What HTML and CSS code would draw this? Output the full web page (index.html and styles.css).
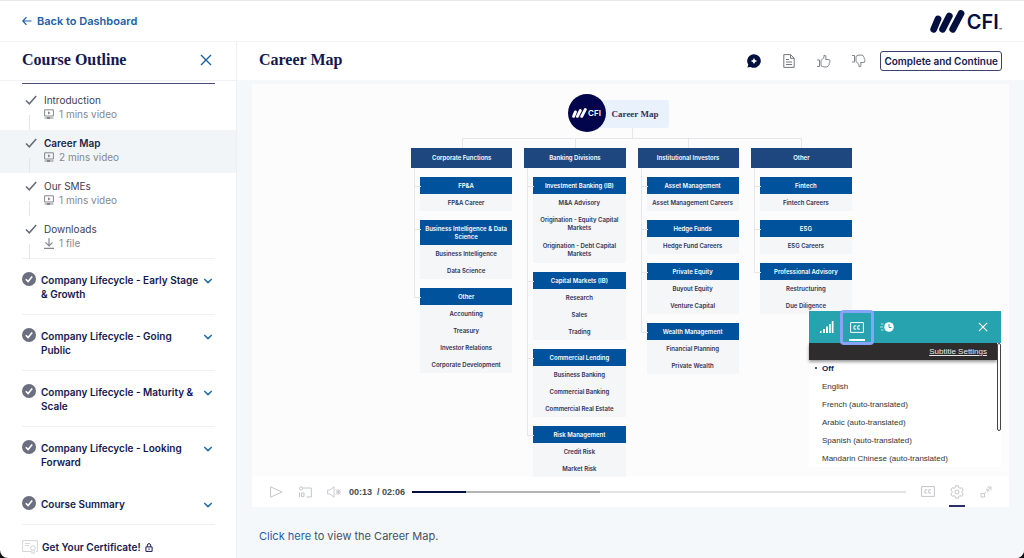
FILE: index.html
```html
<!DOCTYPE html>
<html lang="en">
<head>
    <meta charset="UTF-8">
    <meta name="viewport" content="width=device-width, initial-scale=1.0">
    <title>Career Map - CFI</title>
    <link rel="stylesheet" href="styles.css">
</head>
<body>
    <svg class="sprite" aria-hidden="true">
        <symbol id="check" viewBox="0 0 12 10"><path d="M1 5.5 L4.3 8.8 L11.2 1" fill="none" stroke="currentColor" stroke-width="1.5"/></symbol>
        <symbol id="done" viewBox="0 0 14 14"><circle cx="7" cy="7" r="7" fill="#6b6f80"/><path d="M3.8 7.2 L6.1 9.5 L10.2 4.4" fill="none" stroke="#fff" stroke-width="1.6"/></symbol>
        <symbol id="chevron" viewBox="0 0 10 6"><path d="M1.3 1 L5 4.6 L8.7 1" fill="none" stroke="currentColor" stroke-width="1.5"/></symbol>
        <symbol id="video" viewBox="0 0 10 10"><path d="M.6 .8 H9.4 V7 H.6 Z M.5 9 H9.5" fill="none" stroke="currentColor"/><path d="M4 2.2 L6.6 3.9 L4 5.6 Z M3 8 h3 v2 h-3z" fill="currentColor"/></symbol>
        <symbol id="bars" viewBox="0 0 35 23"><path d="M3.700 19.300 L8 9 M12.600 19.300 L19.300 6 M22.700 19.300 L31 3.500" fill="none" stroke="currentColor" stroke-width="6.800" stroke-linecap="round"/></symbol>
        <symbol id="cross" viewBox="0 0 12 12"><path d="M1 1 L11 11 M11 1 L1 11" fill="none" stroke="currentColor" stroke-width="1.4"/></symbol>
        <symbol id="thumb" viewBox="0 0 15 14"><path d="M1 6 H3.500 V12.500 H1 M5 6.500 L7.500 4.200 Q8.200 3 8 1.200 Q10.200 .8 10 3.600 L9.600 5.500 H12.800 Q14.600 5.900 13.800 7.400 Q14.200 8.500 13.300 9.300 Q13.500 10.500 12.600 11.100 Q12.500 12.700 10.800 12.900 H8 Q6.500 12.700 5 11.600 Z" fill="none" stroke="currentColor" stroke-width=".9"/></symbol>
        <symbol id="cc" viewBox="0 0 14 11"><path d="M.6 .6 H13.400 V10.400 H.6 Z M6.200 3.900 H4 V7.100 H6.200 M10 3.900 H7.800 V7.100 H10" fill="none" stroke="currentColor"/></symbol>
    </svg>

    <div class="app">
        <header class="topbar">
            <a class="back" href="#">
                <svg width="10" height="10" viewBox="0 0 10 10"><path d="M9.500 5 H1 M4.500 1.200 L.8 5 L4.500 8.800" fill="none" stroke="currentColor" stroke-width="1.200"/></svg>
                Back to Dashboard
            </a>
            <a class="logo" href="#"><svg width="35" height="23"><use href="#bars"/></svg><span>CFI</span><small>™</small></a>
        </header>

        <div class="layout">
            <aside class="sidebar">
                <div class="sidebar-head">
                    <h2>Course Outline</h2>
                    <button type="button" aria-label="Close outline"><svg width="12" height="12"><use href="#cross"/></svg></button>
                </div>

                <ul class="lessons">
                    <li>
                        <svg class="tick" width="12" height="10"><use href="#check"/></svg>
                        <a href="#">Introduction</a>
                        <p><svg width="10" height="10"><use href="#video"/></svg>1 mins video</p>
                    </li>
                    <li class="current">
                        <svg class="tick" width="12" height="10"><use href="#check"/></svg>
                        <a href="#">Career Map</a>
                        <p><svg width="10" height="10"><use href="#video"/></svg>2 mins video</p>
                    </li>
                    <li>
                        <svg class="tick" width="12" height="10"><use href="#check"/></svg>
                        <a href="#">Our SMEs</a>
                        <p><svg width="10" height="10"><use href="#video"/></svg>1 mins video</p>
                    </li>
                    <li>
                        <svg class="tick" width="12" height="10"><use href="#check"/></svg>
                        <a href="#">Downloads</a>
                        <p><svg width="10" height="11" viewBox="0 0 10 11"><path d="M5 0 V7.500 M1.500 4.300 L5 7.800 L8.500 4.300 M0 10.300 H10" fill="none" stroke="currentColor" stroke-width="1.200"/></svg>1 file</p>
                    </li>
                </ul>

                <div class="sections">
                    <button type="button"><svg width="14" height="14"><use href="#done"/></svg><span>Company Lifecycle - Early Stage &amp; Growth</span><svg class="chev" width="10" height="6"><use href="#chevron"/></svg></button>
                    <button type="button"><svg width="14" height="14"><use href="#done"/></svg><span>Company Lifecycle - Going Public</span><svg class="chev" width="10" height="6"><use href="#chevron"/></svg></button>
                    <button type="button"><svg width="14" height="14"><use href="#done"/></svg><span>Company Lifecycle - Maturity &amp; Scale</span><svg class="chev" width="10" height="6"><use href="#chevron"/></svg></button>
                    <button type="button" class="plain"><svg width="14" height="14"><use href="#done"/></svg><span>Company Lifecycle - Looking Forward</span><svg class="chev" width="10" height="6"><use href="#chevron"/></svg></button>
                    <button type="button"><svg width="14" height="14"><use href="#done"/></svg><span>Course Summary</span><svg class="chev" width="10" height="6"><use href="#chevron"/></svg></button>
                </div>

                <a class="certificate" href="#">
                    <svg width="16" height="14" viewBox="0 0 16 14" fill="none" stroke="#d4d6da"><path d="M9 11.500 H.6 V.6 H15.400 V11.500 H14 M3 3.500 H8 M3 5.500 H7"/><circle cx="11" cy="8" r="2.300"/><path d="M9.800 10 V13.500 L11 12.700 L12.300 13.500 V10"/></svg>
                    Get Your Certificate!
                    <svg width="8" height="9" viewBox="0 0 8 9" fill="none" stroke="currentColor"><path d="M.9 3.900 H7.100 V8.400 H.9 Z M2.300 3.800 V2.200 Q2.500 .6 4 .6 Q5.500 .6 5.700 2.200 V3.800 M4 5.400 V7"/></svg>
                </a>
            </aside>

            <main>
                <div class="lesson-head">
                    <h1>Career Map</h1>
                    <div class="actions">
                        <button type="button" aria-label="Ask"><svg width="14" height="14" viewBox="0 0 14 14"><path d="M7 .2 A6.800 6.800 0 1 1 3.600 12.900 L.4 13.600 L1.300 10.700 A6.800 6.800 0 0 1 7 .2 Z" fill="#03103f"/><path d="M7 3.500 Q7.400 6.500 10.400 7 Q7.400 7.500 7 10.500 Q6.600 7.500 3.600 7 Q6.600 6.500 7 3.500 Z" fill="#fff"/></svg></button>
                        <button type="button" aria-label="Notes"><svg width="12" height="14" viewBox="0 0 12 14" fill="none" stroke="currentColor"><path d="M.8 .6 H7.500 L11.200 4.300 V13.400 H.8 Z M7.500 .8 V4.300 H11 M3 5.500 H6 M3 8 H9 M3 10.500 H9"/></svg></button>
                        <button type="button" aria-label="Like"><svg width="15" height="14"><use href="#thumb"/></svg></button>
                        <button type="button" aria-label="Dislike"><svg class="flip" width="15" height="14"><use href="#thumb"/></svg></button>
                        <button type="button" class="complete">Complete and Continue</button>
                    </div>
                </div>

                <section class="player">
                    <div class="chart">
                        <div class="root"><span class="badge"><svg width="15" height="10"><use href="#bars"/></svg>CFI</span>Career Map</div>
                        <div class="columns">
                            <div class="column">
                                <h3>Corporate Functions</h3>
                                <dl><dt>FP&amp;A</dt><dd>FP&amp;A Career</dd></dl>
                                <dl><dt>Business Intelligence &amp; Data<br>Science</dt><dd>Business Intelligence</dd><dd>Data Science</dd></dl>
                                <dl><dt>Other</dt><dd>Accounting</dd><dd>Treasury</dd><dd>Investor Relations</dd><dd>Corporate Development</dd></dl>
                            </div>
                            <div class="column">
                                <h3>Banking Divisions</h3>
                                <dl><dt>Investment Banking (IB)</dt><dd>M&amp;A Advisory</dd><dd class="tall">Origination - Equity Capital<br>Markets</dd><dd class="tall">Origination - Debt Capital<br>Markets</dd></dl>
                                <dl><dt>Capital Markets (IB)</dt><dd>Research</dd><dd>Sales</dd><dd>Trading</dd></dl>
                                <dl><dt>Commercial Lending</dt><dd>Business Banking</dd><dd>Commercial Banking</dd><dd>Commercial Real Estate</dd></dl>
                                <dl><dt>Risk Management</dt><dd>Credit Risk</dd><dd>Market Risk</dd></dl>
                            </div>
                            <div class="column">
                                <h3>Institutional Investors</h3>
                                <dl><dt>Asset Management</dt><dd>Asset Management Careers</dd></dl>
                                <dl><dt>Hedge Funds</dt><dd>Hedge Fund Careers</dd></dl>
                                <dl><dt>Private Equity</dt><dd>Buyout Equity</dd><dd>Venture Capital</dd></dl>
                                <dl><dt>Wealth Management</dt><dd>Financial Planning</dd><dd>Private Wealth</dd></dl>
                            </div>
                            <div class="column">
                                <h3>Other</h3>
                                <dl><dt>Fintech</dt><dd>Fintech Careers</dd></dl>
                                <dl><dt>ESG</dt><dd>ESG Careers</dd></dl>
                                <dl><dt>Professional Advisory</dt><dd>Restructuring</dd><dd>Due Diligence</dd></dl>
                            </div>
                        </div>
                    </div>

                    <div class="popup">
                        <div class="tabs">
                            <button type="button" aria-label="Quality"><svg width="14" height="12" viewBox="0 0 14 12" fill="currentColor"><path d="M0 10h1.500v2H0z M3 8h2v4H3z M6 5.500h2V12H6z M9 3h1.800v9H9z M11.800 0h1.700v12h-1.700z"/></svg></button>
                            <button type="button" class="active" aria-label="Captions"><svg width="14" height="11"><use href="#cc"/></svg></button>
                            <button type="button" aria-label="Speed"><svg width="14" height="12" viewBox="0 0 14 12"><circle cx="9" cy="6" r="4.800" fill="currentColor"/><path d="M9 3 V6.500 H11.500" fill="none" stroke="#26a3af"/><path d="M1 3 H3.500 M0 6 H3 M1 9 H3.500" stroke="currentColor" stroke-width=".7"/></svg></button>
                            <button type="button" class="close" aria-label="Close"><svg width="10" height="10"><use href="#cross"/></svg></button>
                        </div>
                        <div class="popup-body">
                            <div class="settings"><a href="#">Subtitle Settings</a></div>
                            <ul class="languages">
                                <li class="selected"><button type="button">Off</button></li>
                                <li><button type="button">English</button></li>
                                <li><button type="button">French (auto-translated)</button></li>
                                <li><button type="button">Arabic (auto-translated)</button></li>
                                <li><button type="button">Spanish (auto-translated)</button></li>
                                <li><button type="button">Mandarin Chinese (auto-translated)</button></li>
                            </ul>
                            <span class="scrollbar"></span>
                        </div>
                    </div>

                    <div class="controls">
                        <button type="button" aria-label="Play"><svg width="13" height="12" viewBox="0 0 13 12"><path d="M.6 .8 L12 6 L.6 11.200 Z" fill="none" stroke="currentColor"/></svg></button>
                        <button type="button" aria-label="Rewind 10 seconds"><svg width="14" height="12" viewBox="0 0 14 12"><path d="M4 2 H13.300 V11 H8.500 M3 .5 L1 2.300 L3 4.200 L5 2.300 Z M1.500 6.500 V11 M3.500 7 H6 V10.600 H3.500 Z" fill="none" stroke="currentColor"/></svg></button>
                        <button type="button" aria-label="Mute"><svg width="14" height="12" viewBox="0 0 14 12"><path d="M.6 4 H3 L7 .8 V11.200 L3 8 H.6 Z M9 3.500 L13.500 8.500 M13.500 3.500 L9 8.500 M11.200 3 V9 M9 6 H14" fill="none" stroke="currentColor" stroke-width=".9"/></svg></button>
                        <span class="time">00:13 &nbsp;/ 02:06</span>
                        <input class="seek" type="range" min="0" max="126" value="13" aria-label="Seek">
                        <button type="button" aria-label="Captions"><svg width="14" height="11"><use href="#cc"/></svg></button>
                        <button type="button" class="on" aria-label="Settings"><svg width="14" height="14" viewBox="0 0 14 14" fill="none" stroke="currentColor"><path d="M5.600 .8 H8.400 L8.800 2.600 L10 3.300 L11.800 2.700 L13.200 5.100 L11.900 6.300 V7.700 L13.200 8.900 L11.800 11.300 L10 10.700 L8.800 11.400 L8.400 13.200 H5.600 L5.200 11.400 L4 10.700 L2.200 11.300 L.8 8.900 L2.100 7.700 V6.300 L.8 5.100 L2.200 2.700 L4 3.300 L5.200 2.600 Z"/><circle cx="7" cy="7" r="2"/></svg></button>
                        <button type="button" aria-label="Full screen"><svg width="12" height="12" viewBox="0 0 12 12"><path d="M7.500 1 H11 V4.500 M11 1 L7 5 M7 2.500 V5 H9.500 M1 7.500 H4.500 V11 H1 Z M4.500 7.500 L6 6" fill="none" stroke="currentColor" stroke-width=".9"/></svg></button>
                    </div>
                </section>

                <p class="note"><a href="#">Click here</a> to view the Career Map.</p>
            </main>
        </div>
    </div>
</body>
</html>
```
FILE: styles.css
```css
* {
    box-sizing: border-box;
}
html {
    background-color: #111;
}
body {
    margin: 0;
    font-family: Inter, "Liberation Sans", sans-serif;
    font-size: 10px;
    color: #4a4e5e;
}
h1, h2, h3, p, ul, dl, dd {
    margin: 0;
    padding: 0;
}
ul {
    list-style: none;
}
a {
    color: #1b5fa3;
    text-decoration: none;
}
button {
    padding: 0;
    border: none;
    background: none;
    font: inherit;
    color: inherit;
    cursor: pointer;
}
svg {
    display: block;
    flex: none;
}
.sprite {
    position: absolute;
    width: 0;
    height: 0;
}
.app {
    display: flex;
    flex-direction: column;
    height: 100vh;
    background-color: white;
    border-top: 1px solid #e6e7e9;
    border-radius: 0 0 8px 8px;
    overflow: hidden;
}

/* top bar */
.topbar {
    display: flex;
    align-items: center;
    justify-content: space-between;
    height: 41px;
    flex: none;
    padding: 0 22px;
    border-bottom: 1px solid #f3f4f5;
}
.back {
    display: flex;
    align-items: center;
    gap: 5px;
    font-size: 11px;
    font-weight: 600;
}
.logo {
    display: flex;
    align-items: center;
    color: #03103f;
    font-size: 20px;
    font-weight: 600;
    line-height: 24px;
}
.logo span {
    margin: 2px 0 0 2px;
}
.logo small {
    align-self: flex-end;
    font-size: 5px;
    line-height: 8px;
}

.layout {
    display: flex;
    flex: 1;
    min-height: 0;
}

/* sidebar */
.sidebar {
    width: 237px;
    flex: none;
    overflow: hidden;
    border-right: 1px solid #edf0f2;
}
.sidebar-head {
    display: flex;
    align-items: center;
    justify-content: space-between;
    height: 39px;
    padding: 0 24px 2px 22px;
    border-bottom: 1px solid #f0f1f3;
    color: #1b5fa3;
}
h1, h2 {
    font-family: "Liberation Serif", serif;
    font-size: 16px;
    line-height: 20px;
    color: #14184f;
}
.lessons {
    padding-top: 2px;
}
.lessons::before {
    content: "";
    display: block;
    margin: 0 21px 3px 22px;
    border-top: 1px solid #4b4f7c;
}
.lessons li {
    position: relative;
    height: 43px;
    padding: 6px 0 0 44px;
}
.lessons li::after {
    content: "";
    position: absolute;
    left: 29px;
    top: 28px;
    bottom: 0;
    border-left: 1px solid #e4e6e9;
}
.lessons a {
    display: block;
    line-height: 14px;
    color: #3e4152;
}
.lessons p {
    display: flex;
    align-items: center;
    gap: 5px;
    line-height: 14px;
    color: #85878f;
}
.lessons .current {
    background-color: #f2f5f7;
}
.current a {
    font-weight: 600;
    color: #23264a;
}
.tick {
    position: absolute;
    left: 25px;
    top: 8px;
    color: #666a78;
}
.sections {
    padding: 0 21px 0 22px;
    margin-top: -1px;
}
.sections button {
    display: flex;
    align-items: flex-start;
    width: 100%;
    padding: 13px 2px 13px 0;
    border-bottom: 1px solid #f0f1f3;
    font-weight: 600;
    line-height: 14px;
    text-align: left;
    color: #14184f;
}
.sections button:first-child {
    border-top: 1px solid #f0f1f3;
}
.sections .plain {
    border-color: white;
}
.sections span {
    flex: 1;
    margin: 1px 4px 0 5px;
}
.chev {
    margin-top: 6px;
    color: #1b6fa8;
}
.certificate {
    display: flex;
    align-items: center;
    gap: 4px;
    padding: 15px 22px;
    font-weight: 600;
    line-height: 14px;
    color: #14184f;
}

/* lesson */
main {
    flex: 1;
    min-width: 0;
    background-color: #f4f8fb;
}
.lesson-head {
    display: flex;
    align-items: center;
    justify-content: space-between;
    height: 39px;
    padding: 0 22px;
    background-color: white;
    border-bottom: 1px solid #f7f8fa;
}
.lesson-head h1 {
    padding-bottom: 2px;
}
.actions {
    display: flex;
    align-items: center;
    gap: 20px;
    color: #73767f;
}
.actions button {
    display: flex;
    align-items: center;
    justify-content: center;
    min-width: 15px;
}
.actions .complete {
    height: 20px;
    margin-left: -6px;
    padding: 0 3px;
    border: 1px solid #3d4170;
    border-radius: 3px;
    font-weight: 600;
    color: #14184f;
}
.flip {
    transform: scaleY(-1);
}
.player {
    position: relative;
    margin: 3px 15px 0;
    background-color: #fcfcfd;
}

/* career chart */
.chart {
    padding: 16px 0 0 2px;
    font-size: 6px;
    font-weight: 600;
    line-height: 8px;
    text-align: center;
    color: #2f3257;
}
.root {
    position: relative;
    width: 74px;
    margin: 0 auto;
    padding-left: 7px;
    background-color: #e9f2fc;
    border-radius: 2px;
    font-family: "Liberation Serif", serif;
    font-size: 9px;
    font-weight: bold;
    line-height: 28px;
}
.root::after {
    content: "";
    position: absolute;
    left: 37px;
    top: 28px;
    height: 10px;
    border-left: 1px solid #e4e6ea;
}
.badge {
    position: absolute;
    left: -27px;
    top: -6px;
    display: flex;
    align-items: center;
    justify-content: center;
    gap: 1px;
    width: 38px;
    height: 38px;
    border-radius: 50%;
    background-color: #03054c;
    color: white;
    font-family: Inter, sans-serif;
    font-size: 8px;
    font-weight: 600;
}
.columns {
    display: grid;
    grid-template-columns: repeat(4, 1fr);
    gap: 12px;
    max-width: 441px;
    height: 348px;
    margin: 0 auto;
}
.column {
    position: relative;
    padding-top: 20px;
}
.column::before {
    content: "";
    position: absolute;
    top: 10px;
    left: 50%;
    right: -62px;
    height: 10px;
    border: solid #e4e6ea;
    border-width: 1px 0 0 1px;
}
.column:last-child::before {
    right: 50%;
}
.column h3 {
    position: relative;
    background-color: #1f477f;
    color: white;
    font-size: 6px;
    font-weight: 600;
    line-height: 20px;
}
.column dl {
    position: relative;
    margin: 9px 0 0 9px;
}
.column dl::before {
    content: "";
    position: absolute;
    left: -6px;
    top: -9px;
    width: 6px;
    height: 18px;
    border: solid #e4e6ea;
    border-width: 0 0 1px 1px;
}
.column dl:not(:last-child)::after {
    content: "";
    position: absolute;
    left: -6px;
    top: 0;
    bottom: 0;
    border-left: 1px solid #e4e6ea;
}
.column dt {
    padding: 5px 0 4px;
    background-color: #00529c;
    color: white;
}
.column dd {
    padding: 5px 0 4px;
    background-color: #f5f6f8;
}
.column .tall {
    padding: 5px 0;
}

/* captions popup */
.popup {
    position: absolute;
    right: 8px;
    bottom: 40px;
    width: 192px;
    background-color: white;
    font-family: "Liberation Sans", sans-serif;
    font-size: 8px;
    color: #333;
}
.tabs {
    position: relative;
    z-index: 1;
    display: flex;
    height: 32px;
    padding-left: 3px;
    background-color: #26a3af;
    color: white;
}
.tabs button {
    display: flex;
    align-items: center;
    justify-content: center;
    width: 30px;
}
.tabs .active {
    position: relative;
    width: 34px;
    margin: -1px -2px -2px;
    box-shadow: inset 0 0 0 3px #86a5f8;
    border-radius: 4px;
}
.active::after {
    content: "";
    position: absolute;
    left: 9px;
    right: 9px;
    bottom: 4px;
    border-bottom: 2px solid white;
}
.tabs .close {
    margin-left: auto;
    width: 37px;
}
.popup-body {
    position: relative;
}
.settings {
    margin-right: 4px;
    padding-right: 10px;
    background-color: #2e2c2d;
    box-shadow: 0 2px 3px rgba(0,0,0,0.4);
    line-height: 17px;
    text-align: right;
}
.settings a {
    color: #e8e8e8;
    text-decoration: underline;
}
.languages {
    margin-top: -1px;
}
.languages li {
    display: flex;
    align-items: center;
    height: 18px;
    padding-left: 13px;
}
.languages .selected {
    position: relative;
    font-weight: bold;
    color: #14184f;
}
.selected::before {
    content: "";
    position: absolute;
    left: 6px;
    width: 2px;
    height: 2px;
    border-radius: 50%;
    background-color: #14184f;
}
.scrollbar {
    position: absolute;
    top: 0;
    right: 0;
    width: 4px;
    height: 88px;
    border: 1px solid #444;
    border-radius: 2px;
    background-color: white;
}

/* player controls */
.controls {
    display: flex;
    align-items: center;
    gap: 15px;
    height: 31px;
    padding: 0 16px 0 17px;
    background-color: white;
    color: #c4c5c9;
}
.controls button {
    display: flex;
    justify-content: center;
    min-width: 14px;
}
.time {
    margin: 0 -8px 0 -7px;
    font-family: "Liberation Sans", sans-serif;
    font-size: 9px;
    font-weight: bold;
    color: #4a4a4f;
}
.seek {
    appearance: none;
    flex: 1;
    min-width: 0;
    height: 2px;
    margin: 0;
    background: linear-gradient(to right, #03103f 11%, #b4b4b4 11% 38%, #e3e3e3 38%);
}
.seek::-webkit-slider-thumb {
    appearance: none;
    width: 0;
    height: 0;
}
.on {
    position: relative;
}
.on::after {
    content: "";
    position: absolute;
    left: -1px;
    right: -1px;
    bottom: -8px;
    border-bottom: 2px solid #2b2f66;
}
.note {
    padding: 22px;
    font-size: 11px;
    line-height: 14px;
}
```
